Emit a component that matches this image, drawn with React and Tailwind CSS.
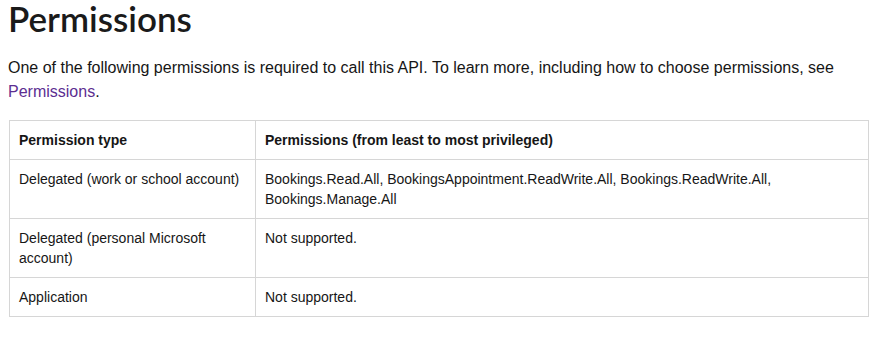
export default function App() {
  const rows = [
    ["Delegated (work or school account)", "Bookings.Read.All, BookingsAppointment.ReadWrite.All, Bookings.ReadWrite.All, Bookings.Manage.All"],
    ["Delegated (personal Microsoft account)", "Not supported."],
    ["Application", "Not supported."],
  ];
  return (
    <div className="bg-white w-[890px] h-[338px] overflow-hidden pl-2 text-[#161616]" style={{ fontFamily: '"Liberation Sans", Arial, sans-serif' }}>
      <h2 className="text-[35px] leading-[36px] font-semibold text-[#1a1a1a]" style={{ fontFamily: 'Lato, "Liberation Sans", sans-serif' }}>Permissions</h2>
      <p className="mt-[20px] text-[16px] leading-6 w-[840px]">
        One of the following permissions is required to call this API. To learn more, including how to choose permissions, see{" "}
        <a className="text-[#5c2e91]">Permissions</a>.
      </p>
      <table className="mt-[16px] ml-px w-[860px] border-collapse text-[14px] leading-5">
        <thead>
          <tr>
            <th className="w-[246px] border border-[#d6d6d6] px-[9px] py-[9px] text-left font-bold">Permission type</th>
            <th className="border border-[#d6d6d6] px-[9px] py-[9px] text-left font-bold">Permissions (from least to most privileged)</th>
          </tr>
        </thead>
        <tbody>
          {rows.map((r, i) => (
            <tr key={i}>
              <td className="w-[246px] border border-[#d6d6d6] px-[9px] py-[9px] align-top">{r[0]}</td>
              <td className="border border-[#d6d6d6] pl-[9px] pr-[60px] py-[9px] align-top">{r[1]}</td>
            </tr>
          ))}
        </tbody>
      </table>
    </div>
  );
}
